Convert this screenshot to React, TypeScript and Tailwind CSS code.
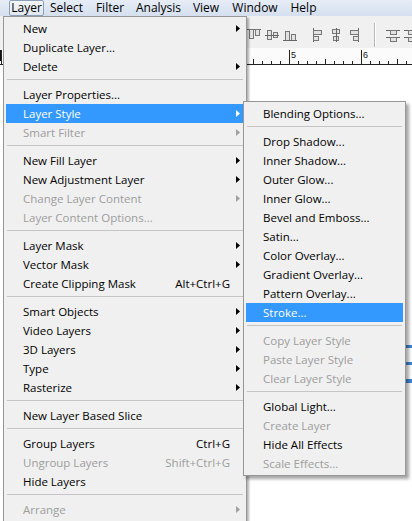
import React from 'react'

type Entry =
  | 'sep'
  | { label: string; shortcut?: string; arrow?: boolean; disabled?: boolean; active?: boolean }

const layerMenu: Entry[] = [
  { label: 'New', arrow: true },
  { label: 'Duplicate Layer...' },
  { label: 'Delete', arrow: true },
  'sep',
  { label: 'Layer Properties...' },
  { label: 'Layer Style', arrow: true, active: true },
  { label: 'Smart Filter', arrow: true, disabled: true },
  'sep',
  { label: 'New Fill Layer', arrow: true },
  { label: 'New Adjustment Layer', arrow: true },
  { label: 'Change Layer Content', arrow: true, disabled: true },
  { label: 'Layer Content Options...', disabled: true },
  'sep',
  { label: 'Layer Mask', arrow: true },
  { label: 'Vector Mask', arrow: true },
  { label: 'Create Clipping Mask', shortcut: 'Alt+Ctrl+G' },
  'sep',
  { label: 'Smart Objects', arrow: true },
  { label: 'Video Layers', arrow: true },
  { label: '3D Layers', arrow: true },
  { label: 'Type', arrow: true },
  { label: 'Rasterize', arrow: true },
  'sep',
  { label: 'New Layer Based Slice' },
  'sep',
  { label: 'Group Layers', shortcut: 'Ctrl+G' },
  { label: 'Ungroup Layers', shortcut: 'Shift+Ctrl+G', disabled: true },
  { label: 'Hide Layers' },
  'sep',
  { label: 'Arrange', arrow: true, disabled: true },
]

const styleMenu: Entry[] = [
  { label: 'Blending Options...' },
  'sep',
  { label: 'Drop Shadow...' },
  { label: 'Inner Shadow...' },
  { label: 'Outer Glow...' },
  { label: 'Inner Glow...' },
  { label: 'Bevel and Emboss...' },
  { label: 'Satin...' },
  { label: 'Color Overlay...' },
  { label: 'Gradient Overlay...' },
  { label: 'Pattern Overlay...' },
  { label: 'Stroke...', active: true },
  'sep',
  { label: 'Copy Layer Style', disabled: true },
  { label: 'Paste Layer Style', disabled: true },
  { label: 'Clear Layer Style', disabled: true },
  'sep',
  { label: 'Global Light...' },
  { label: 'Create Layer', disabled: true },
  { label: 'Hide All Effects' },
  { label: 'Scale Effects...', disabled: true },
]

const menuBar = [
  { label: 'Layer', w: 'w-[35px]', open: true },
  { label: 'Select', w: 'w-[45px]' },
  { label: 'Filter', w: 'w-[42px]' },
  { label: 'Analysis', w: 'w-[55px]' },
  { label: 'View', w: 'w-[40px]' },
  { label: 'Window', w: 'w-[58px]' },
  { label: 'Help', w: 'w-[39px]' },
]

function Arrow({ color }: { color: string }) {
  return (
    <svg width="4" height="7" viewBox="0 0 4 7">
      <polygon points="0,0 4,3.5 0,7" fill={color} />
    </svg>
  )
}

function MenuList({ items }: { items: Entry[] }) {
  return (
    <>
      {items.map((item, i) => {
        if (item === 'sep') {
          return (
            <div key={i} className="h-[9px] pt-[3px] px-[1px]">
              <div className="h-px bg-[#c5c5c5]" />
            </div>
          )
        }
        const color = item.active ? 'text-white' : item.disabled ? 'text-[#9d9d9d]' : 'text-black'
        const arrowColor = item.active ? '#ffffff' : item.disabled ? '#a0a0a0' : '#000000'
        return (
          <div
            key={i}
            className={`flex items-center h-[19px] pl-[17px] whitespace-nowrap ${color} ${item.active ? 'bg-[#3399ff]' : ''}`}
          >
            <span className="flex-1">{item.label}</span>
            {item.shortcut && <span>{item.shortcut}</span>}
            <span className="w-[14px] flex-none flex items-center pl-[6px]">
              {item.arrow && <Arrow color={arrowColor} />}
            </span>
          </div>
        )
      })}
    </>
  )
}

function AlignIcon({ kind }: { kind: string }) {
  const line = '#666666'
  const box = { fill: '#e2e2e2', stroke: '#777777', strokeWidth: 1 }
  return (
    <svg width="16" height="16" viewBox="0 0 16 16" className="flex-none">
      {kind === 'top' && (
        <>
          <line x1="1" y1="2.5" x2="15" y2="2.5" stroke={line} />
          <rect x="3.5" y="2.5" width="4" height="9" {...box} />
          <rect x="9.5" y="2.5" width="4" height="6" {...box} />
        </>
      )}
      {kind === 'vcenter' && (
        <>
          <rect x="3.5" y="3.5" width="4" height="9" {...box} />
          <rect x="9.5" y="5.5" width="4" height="5" {...box} />
          <line x1="1" y1="8.5" x2="15" y2="8.5" stroke={line} />
        </>
      )}
      {kind === 'bottom' && (
        <>
          <rect x="3.5" y="4.5" width="4" height="9" {...box} />
          <rect x="9.5" y="7.5" width="4" height="6" {...box} />
          <line x1="1" y1="13.5" x2="15" y2="13.5" stroke={line} />
        </>
      )}
      {kind === 'left' && (
        <>
          <line x1="3.5" y1="1" x2="3.5" y2="15" stroke={line} />
          <rect x="3.5" y="3.5" width="8" height="4" {...box} />
          <rect x="3.5" y="9.5" width="5" height="4" {...box} />
        </>
      )}
      {kind === 'hcenter' && (
        <>
          <rect x="4.5" y="2.5" width="7" height="4" {...box} />
          <rect x="5.5" y="9.5" width="5" height="4" {...box} />
          <line x1="8.5" y1="1" x2="8.5" y2="15" stroke={line} />
        </>
      )}
      {kind === 'right' && (
        <>
          <line x1="12.5" y1="1" x2="12.5" y2="15" stroke={line} />
          <rect x="4.5" y="3.5" width="8" height="4" {...box} />
          <rect x="7.5" y="9.5" width="5" height="4" {...box} />
        </>
      )}
      {kind === 'dist' && (
        <>
          <line x1="1" y1="3.5" x2="15" y2="3.5" stroke={line} />
          <line x1="1" y1="10.5" x2="15" y2="10.5" stroke={line} />
          <rect x="5.5" y="3.5" width="6" height="4" {...box} />
          <rect x="5.5" y="10.5" width="6" height="4" {...box} />
        </>
      )}
    </svg>
  )
}

function Ruler() {
  const ticks = []
  for (let i = 0; i < 60; i++) {
    const x = 289 - 72 * 4 + i * 9 + 0.5
    const step = i % 8
    const top = step === 0 ? 2 : step === 4 ? 11 : 13
    ticks.push(<line key={i} x1={x} y1={top} x2={x} y2={17} stroke="#222222" />)
  }
  return (
    <svg width="412" height="18" viewBox="0 0 412 18" className="block">
      <rect x="0" y="2" width="2" height="11" fill="#111111" />
      {ticks}
      <line x1="0" y1="16.5" x2="412" y2="16.5" stroke="#222222" />
      <text x="291" y="10" fontSize="9" fontFamily="Liberation Sans, sans-serif" fill="#111111">5</text>
      <text x="363" y="10" fontSize="9" fontFamily="Liberation Sans, sans-serif" fill="#111111">6</text>
    </svg>
  )
}

export default function App() {
  return (
    <div className="relative w-[412px] h-[521px] overflow-hidden bg-white flex flex-col font-['Open_Sans',sans-serif] text-[11.5px] leading-[19px]">
      {/* menu bar */}
      <div className="flex h-[16px] pl-[9px] bg-gradient-to-b from-[#e6edf7] to-[#d5dfee] flex-none text-[12px]">
        {menuBar.map(m => (
          <div
            key={m.label}
            className={`${m.w} h-[16px] flex items-center justify-center leading-[14px] text-black ${
              m.open ? 'border border-[#8e9eb5] rounded-[2px] bg-gradient-to-b from-[#f3f6fb] to-[#dfe7f2]' : ''
            }`}
          >
            {m.label}
          </div>
        ))}
      </div>

      {/* options bar */}
      <div className="flex items-center h-[32px] pt-[6px] pl-[246px] bg-[#f0f0f0] flex-none">
        <div className="flex items-center gap-[2px]">
          <AlignIcon kind="top" />
          <AlignIcon kind="vcenter" />
          <AlignIcon kind="bottom" />
        </div>
        <div className="flex items-center gap-[2px] ml-[12px]">
          <AlignIcon kind="left" />
          <AlignIcon kind="hcenter" />
          <AlignIcon kind="right" />
        </div>
        <div className="ml-[12px] w-[2px] h-[24px] border-l border-[#b8b8b8] border-r border-r-white flex-none" />
        <div className="flex items-center gap-[2px] ml-[9px]">
          <AlignIcon kind="dist" />
          <AlignIcon kind="dist" />
        </div>
      </div>

      {/* ruler */}
      <div className="h-[18px] bg-[#fbfbfb] flex-none">
        <Ruler />
      </div>

      {/* canvas */}
      <div className="relative flex-1 bg-white">
        <div className="absolute left-[406px] top-[279px] w-[6px] h-[3px] bg-[#3f86d6]" />
        <div className="absolute left-[406px] top-[296px] w-[6px] h-[3px] bg-[#3f86d6]" />
        <div className="absolute left-[406px] top-[313px] w-[6px] h-[4px] bg-[#3f86d6]" />
      </div>

      {/* Layer menu */}
      <div className="absolute left-[3px] top-[16px] w-[244px] h-[540px] border border-[#979797] bg-[#f0f0f0] px-[2px] pt-[2px] shadow-[2px_2px_2px_rgba(0,0,0,0.3)]">
        <MenuList items={layerMenu} />

        {/* Layer Style submenu */}
        <div className="absolute left-[239px] top-[84px] w-[163px] border border-[#979797] bg-[#f0f0f0] p-[2px] shadow-[3px_3px_3px_rgba(0,0,0,0.35)]">
          <MenuList items={styleMenu} />
        </div>
      </div>
    </div>
  )
}
